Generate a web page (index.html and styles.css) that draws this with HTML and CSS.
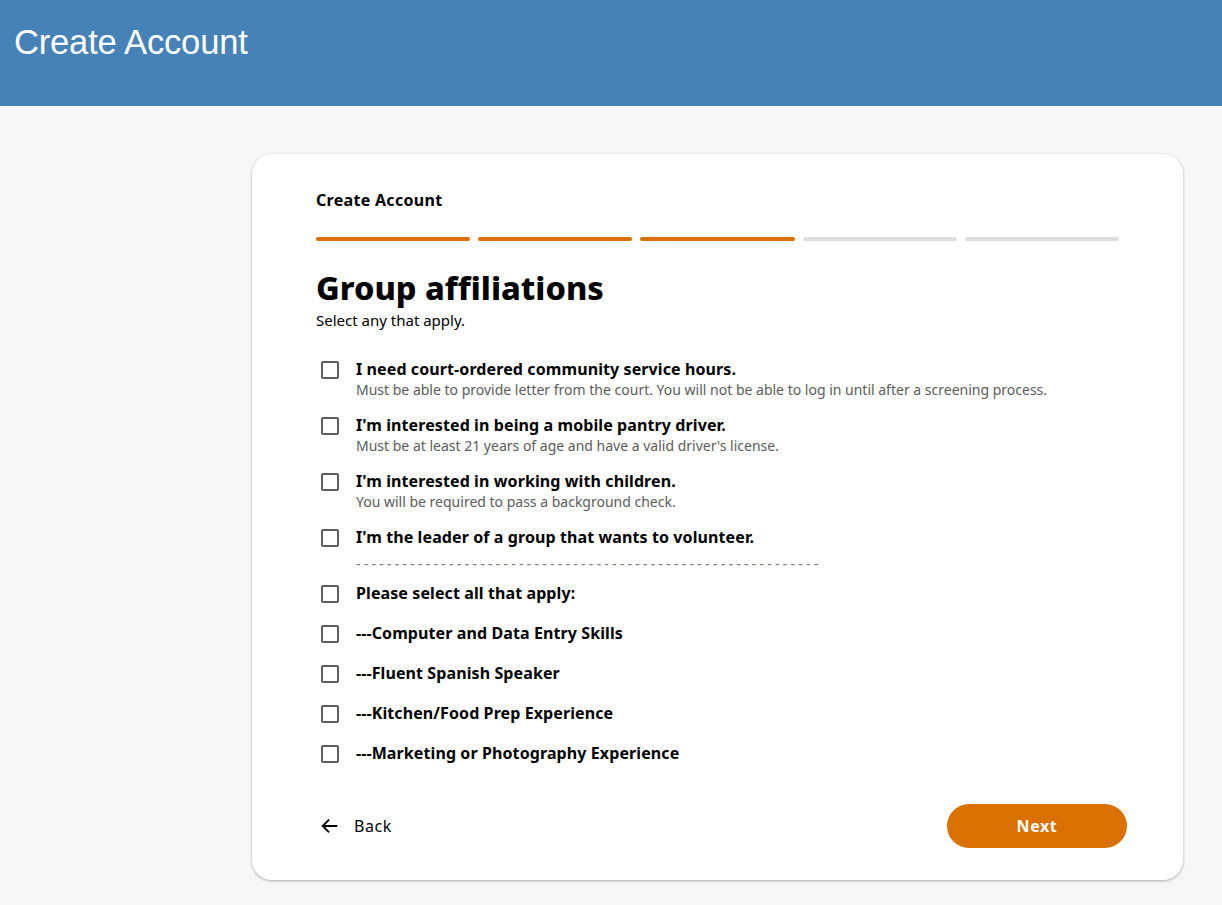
FILE: index.html
```html
<!DOCTYPE html>
<html lang="en">
<head>
  <meta charset="UTF-8">
  <meta name="viewport" content="width=device-width, initial-scale=1.0">
  <title>Create Account</title>
  <link rel="stylesheet" href="styles.css">
</head>
<body>
  <header class="top-bar">
    <h1 class="top-title">Create Account</h1>
  </header>

  <main class="page">
    <div class="card">
      <div class="step-label">Create Account</div>
      <!-- 5 steps, first 3 done -->
      <div class="steps">
        <span class="step done"></span>
        <span class="step done"></span>
        <span class="step done"></span>
        <span class="step"></span>
        <span class="step"></span>
      </div>

      <h2 class="heading">Group affiliations</h2>
      <p class="subheading">Select any that apply.</p>

      <ul class="options">
        <li class="option">
          <span class="box"></span>
          <div class="option-text">
            <div class="option-title">I need court-ordered community service hours.</div>
            <div class="option-desc">Must be able to provide letter from the court. You will not be able to log in until after a screening process.</div>
          </div>
        </li>
        <li class="option">
          <span class="box"></span>
          <div class="option-text">
            <div class="option-title">I'm interested in being a mobile pantry driver.</div>
            <div class="option-desc">Must be at least 21 years of age and have a valid driver's license.</div>
          </div>
        </li>
        <li class="option">
          <span class="box"></span>
          <div class="option-text">
            <div class="option-title">I'm interested in working with children.</div>
            <div class="option-desc">You will be required to pass a background check.</div>
          </div>
        </li>
        <li class="option">
          <span class="box"></span>
          <div class="option-text">
            <div class="option-title">I'm the leader of a group that wants to volunteer.</div>
            <div class="option-desc dashes">------------------------------------------------------------</div>
          </div>
        </li>
        <li class="option">
          <span class="box"></span>
          <div class="option-text">
            <div class="option-title">Please select all that apply:</div>
          </div>
        </li>
        <li class="option">
          <span class="box"></span>
          <div class="option-text">
            <div class="option-title">---Computer and Data Entry Skills</div>
          </div>
        </li>
        <li class="option">
          <span class="box"></span>
          <div class="option-text">
            <div class="option-title">---Fluent Spanish Speaker</div>
          </div>
        </li>
        <li class="option">
          <span class="box"></span>
          <div class="option-text">
            <div class="option-title">---Kitchen/Food Prep Experience</div>
          </div>
        </li>
        <li class="option">
          <span class="box"></span>
          <div class="option-text">
            <div class="option-title">---Marketing or Photography Experience</div>
          </div>
        </li>
      </ul>

      <div class="actions">
        <button class="back-btn">
          <svg width="22" height="22" viewBox="0 0 24 24" fill="none" stroke="#000" stroke-width="2">
            <path d="M20 12H4M11 5l-7 7 7 7"/>
          </svg>
          <span>Back</span>
        </button>
        <button class="next-btn">Next</button>
      </div>
    </div>
  </main>
</body>
</html>
```

FILE: styles.css
```css
html, body, h1, h2, p, ul, li {
  margin: 0;
  padding: 0;
}
body {
  background-color: #f6f7f6;
  font-family: "Noto Sans", "Lato", sans-serif;
  color: #000;
}

.top-bar {
  background-color: #4682b8;
  height: 106px;
  box-sizing: border-box;
  padding: 23px 14px 0;
}
.top-title {
  font-family: "Liberation Sans", Arial, sans-serif;
  font-weight: 300;
  font-size: 34.6px;
  color: #fff;
  letter-spacing: -0.2px;
}

.page {
  padding: 48px 39px 24px 252px;
}
.card {
  background: #fff;
  border-radius: 20px;
  box-shadow: 0 1px 3px rgba(0, 0, 0, .3);
  padding: 36px 64px 32px;
  width: 931px;
  box-sizing: border-box;
}
.step-label {
  font-weight: 700;
  font-size: 16px;
  line-height: 20px;
  letter-spacing: .3px;
}
.steps {
  display: flex;
  gap: 8px;
  margin-top: 27px;
}
.step {
  flex: 1;
  height: 4px;
  border-radius: 2px;
  background-color: #dedede;
}
.step.done {
  background-color: #d97000;
}

.heading {
  margin-top: 26px;
  font-size: 32.5px;
  font-weight: 800;
  line-height: 42px;
}
.subheading {
  font-size: 15px;
  line-height: 20px;
  margin-top: 1px;
}

.options {
  list-style: none;
  margin-top: 21px;
}
.option {
  display: flex;
  align-items: flex-start;
  gap: 17px;
  padding: 6px 0 10px;
}
.box {
  flex: none;
  width: 14px;
  height: 14px;
  border: 2px solid #5f5f5f;
  border-radius: 2px;
  margin: 4px 0 0 5px;
}
.option-title {
  font-size: 16px;
  font-weight: 700;
  line-height: 24px;
  letter-spacing: .1px;
}
.option-desc {
  font-size: 14px;
  line-height: 16px;
  color: #5c5c5c;
  margin: 1px 0 -1px;
}
.option-desc.dashes {
  letter-spacing: 3.25px;
  color: #7a7a7a;
  margin: 7px 0 -7px;
}

.actions {
  display: flex;
  justify-content: space-between;
  align-items: center;
  margin-top: 29px;
}
.back-btn {
  display: flex;
  align-items: center;
  gap: 13px;
  background: none;
  border: none;
  padding: 0 0 0 3px;
  font-family: inherit;
  font-size: 16px;
  letter-spacing: .6px;
  color: #000;
}
.next-btn {
  width: 180px;
  height: 44px;
  border: none;
  border-radius: 22px;
  background-color: #d97000;
  color: #fff;
  font-family: inherit;
  font-size: 16px;
  font-weight: 700;
  letter-spacing: .6px;
  margin-right: -8px;
}
```
